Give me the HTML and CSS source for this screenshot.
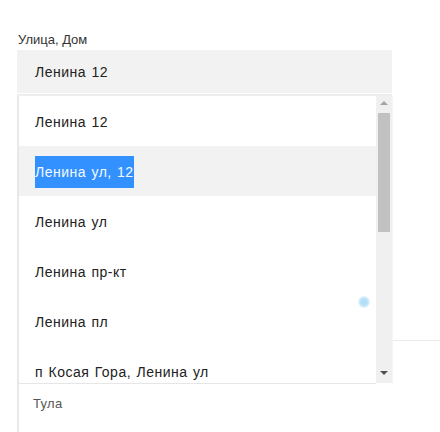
FILE: index.html
```html
<!DOCTYPE html>
<html lang="ru">
<head>
<meta charset="utf-8">
<link rel="stylesheet" href="styles.css">
</head>
<body>
<div class="page">
  <div class="label">Улица, Дом</div>
  <div class="input">Ленина 12</div>
  <div class="sep"></div>
  <div class="wrap">
    <div class="row-top">
      <div class="list">
        <div class="items">
          <div class="item">Ленина 12</div>
          <div class="item hover"><span class="sel">Ленина ул, 12</span></div>
          <div class="item">Ленина ул</div>
          <div class="item">Ленина пр-кт</div>
          <div class="item">Ленина пл</div>
          <div class="item">п Косая Гора, Ленина ул</div>
        </div>
        <div class="scrollbar">
          <div class="arrow up"></div>
          <div class="thumb"></div>
          <div class="spacer"></div>
          <div class="arrow down"></div>
        </div>
      </div>
      <div class="side"><div class="side-line"></div></div>
    </div>
    <div class="bottom-line"></div>
    <div class="city">Тула</div>
    <div class="dot"></div>
  </div>
</div>
</body>
</html>
```

FILE: styles.css
```css
html, body {
  margin: 0;
  padding: 0;
  background: #fff;
}
body {
  font-family: "Liberation Sans", Arial, sans-serif;
  color: #222;
  width: 440px;
  height: 432px;
  overflow: hidden;
}
.page {
  padding-top: 33px;
}
.label {
  font-size: 13px;
  line-height: 14px;
  color: #333;
  margin-left: 18px;
  height: 17px;
}
.input {
  margin-left: 17px;
  width: 357px;
  height: 43px;
  background: #f2f2f2;
  padding-left: 18px;
  font-size: 14px;
  letter-spacing: 0.5px;
  word-spacing: 1px;
  line-height: 45px;
  color: #222;
}
.sep {
  margin-left: 17px;
  width: 375px;
  height: 3px;
  background: linear-gradient(#fff 0 1px, #ededed 1px);
}
.wrap {
  position: relative;
  margin-left: 17px;
  border-left: 2px solid #e8e8e8;
}
.row-top {
  display: flex;
  height: 287px;
}
.list {
  display: flex;
  width: 373px;
  height: 287px;
  overflow: hidden;
}
.items {
  flex: 1;
  height: 287px;
  overflow: hidden;
}
.item {
  height: 50px;
  box-sizing: border-box;
  padding: 10px 0 8px 16px;
  font-size: 14px;
  letter-spacing: 0.5px;
  word-spacing: 1px;
  line-height: 32px;
  white-space: nowrap;
  color: #222;
}
.item.hover {
  background: #f2f2f2;
}
.sel {
  display: inline-block;
  background: #3391ff;
  color: #f4faff;
  height: 32px;
}
.scrollbar {
  width: 16px;
  background: #f0f0f0;
  display: flex;
  flex-direction: column;
  align-items: center;
}
.arrow {
  width: 0;
  height: 0;
  border-left: 4px solid transparent;
  border-right: 4px solid transparent;
}
.arrow.up {
  margin-top: 5px;
  border-bottom: 4px solid #a3a3a3;
}
.arrow.down {
  margin-bottom: 8px;
  border-top: 4px solid #505050;
}
.thumb {
  margin-top: 8px;
  width: 12px;
  height: 119px;
  background: #c1c1c1;
}
.spacer {
  flex: 1;
}
.side {
  flex: 1;
  border-left: 1px solid #f4f4f4;
}
.side-line {
  margin-top: 244px;
  height: 1px;
  background: #ebebeb;
}
.bottom-line {
  width: 357px;
  height: 1px;
  background: #e6e6e6;
}
.city {
  height: 48px;
  padding-left: 14px;
  font-size: 13px;
  letter-spacing: 0.3px;
  line-height: 40px;
  color: #555;
}
.dot {
  position: absolute;
  left: 339px;
  top: 200px;
  width: 12px;
  height: 12px;
  border-radius: 50%;
  background: radial-gradient(circle, #b4e0f7 0 35%, #d8f0fb 60%, rgba(255,255,255,0) 100%);
}
```
